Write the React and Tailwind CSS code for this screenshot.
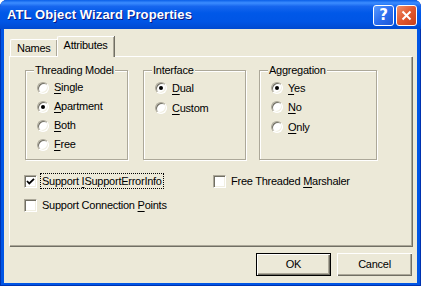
import React from 'react';

const sunken =
  'bg-white border border-t-[#ACA899] border-l-[#ACA899] border-r-white border-b-white shadow-[inset_1px_1px_0_#716F64,inset_-1px_-1px_0_#F1EFE2]';

function Mn({ children }) {
  return <span className="underline underline-offset-[2px] decoration-[1px]">{children}</span>;
}

function Radio({ checked, label }) {
  return (
    <div className="flex items-center h-full">
      <div className={`w-[12px] h-[12px] rounded-full flex items-center justify-center ${sunken}`}>
        {checked && <div className="w-[4px] h-[4px] rounded-full bg-black" />}
      </div>
      <span className="ml-[5px]">{label}</span>
    </div>
  );
}

function Check({ checked, label, focused }) {
  return (
    <div className="flex items-center">
      <div className={`w-[13px] h-[13px] flex items-center justify-center ${sunken}`}>
        {checked && (
          <svg width="9" height="9" viewBox="0 0 9 9">
            <path d="M1 4 L3.3 6.5 L8 1.8" fill="none" stroke="#000" strokeWidth="1.8" />
          </svg>
        )}
      </div>
      <span
        className={`ml-[4px] px-[1px] leading-[14px] ${
          focused ? 'outline outline-1 outline-dotted outline-black' : ''
        }`}
      >
        {label}
      </span>
    </div>
  );
}

function Group({ title, width, rowH, children }) {
  return (
    <div
      className={`relative h-[90px] border border-[#ACA899] shadow-[inset_1px_1px_0_#fff,1px_1px_0_#fff] ${width}`}
    >
      <span className="absolute left-[8px] top-[-8px] px-[1px] bg-[#ECE9D8] leading-[14px]">
        {title}
      </span>
      <div className="flex flex-col pt-[7px] pl-[11px]">
        {React.Children.map(children, (c) => (
          <div className={rowH}>{c}</div>
        ))}
      </div>
    </div>
  );
}

function Button({ children, isDefault }) {
  return (
    <button
      className={`w-[75px] h-[23px] bg-[#ECE9D8] text-[11px] ${
        isDefault
          ? 'border border-black shadow-[inset_1px_1px_0_#fff,inset_-1px_-1px_0_#716F64,inset_-2px_-2px_0_#ACA899]'
          : 'shadow-[inset_1px_1px_0_#fff,inset_-1px_-1px_0_#716F64,inset_-2px_-2px_0_#ACA899]'
      }`}
    >
      {children}
    </button>
  );
}

export default function App() {
  return (
    <div className="w-[421px] h-[286px] bg-white">
      <div className="w-full h-full flex flex-col rounded-t-[7px] overflow-hidden bg-[#0055E5] shadow-[inset_1px_0_0_#0033B0,inset_-1px_0_0_#0033B0,inset_0_-1px_0_#0033B0] font-['Liberation_Sans',Arial,sans-serif] text-[11px] text-black">
        {/* Title bar */}
        <div className="h-[29px] shrink-0 flex items-center px-[7px] bg-[linear-gradient(to_bottom,#0A5FE8_0%,#3C8DFF_10%,#1766EE_22%,#0058E8_45%,#0055E5_75%,#0049D0_100%)]">
          <span className="text-white font-bold text-[13px] tracking-[0.1px] [text-shadow:1px_1px_0_#0A1883]">
            ATL Object Wizard Properties
          </span>
          <div className="ml-auto flex gap-[2px] pt-[1px] mr-[-3px]">
            <div className="w-[21px] h-[21px] rounded-[3px] border border-white flex items-center justify-center bg-[linear-gradient(135deg,#5A9BFF_0%,#2D6FEF_50%,#1C58D8_100%)]">
              <span className="text-white font-bold text-[15px] leading-none font-['DejaVu_Sans',sans-serif]">?</span>
            </div>
            <div className="w-[21px] h-[21px] rounded-[3px] border border-white flex items-center justify-center bg-[linear-gradient(135deg,#F0906A_0%,#E0582F_50%,#C8401C_100%)]">
              <svg width="11" height="11" viewBox="0 0 11 11">
                <path d="M1.5 1.5 L9.5 9.5 M9.5 1.5 L1.5 9.5" stroke="#fff" strokeWidth="2" />
              </svg>
            </div>
          </div>
        </div>

        {/* Client area */}
        <div className="flex-1 mx-[4px] mb-[3px] bg-[#ECE9D8] px-[5px] pt-[7px] flex flex-col tracking-[-0.25px]">
          {/* Tabs */}
          <div className="flex items-end h-[20px] relative z-10">
            <div className="ml-[1px] h-[17px] px-[6px] flex items-center border-l border-t border-white shadow-[inset_-1px_0_0_#ACA899] rounded-tl-[2px]">
              Names
            </div>
            <div className="h-[21px] mb-[-1px] px-[6px] flex items-center bg-[#ECE9D8] border-l border-t border-white shadow-[inset_-1px_0_0_#ACA899,1px_0_0_#716F64] rounded-tl-[2px] pb-[3px]">
              Attributes
            </div>
          </div>

          {/* Tab panel */}
          <div className="h-[190px] border-l border-t border-white shadow-[1px_1px_0_#716F64,inset_-1px_-1px_0_#ACA899] pl-[15px] pt-[13px]">
            <div className="flex">
              <Group title="Threading Model" width="w-[103px]" rowH="h-[19px]">
                <Radio label={<><Mn>S</Mn>ingle</>} />
                <Radio checked label={<><Mn>A</Mn>partment</>} />
                <Radio label={<><Mn>B</Mn>oth</>} />
                <Radio label={<><Mn>F</Mn>ree</>} />
              </Group>
              <div className="ml-[15px]">
                <Group title="Interface" width="w-[103px]" rowH="h-[20px]">
                  <Radio checked label={<><Mn>D</Mn>ual</>} />
                  <Radio label={<><Mn>C</Mn>ustom</>} />
                </Group>
              </div>
              <div className="ml-[13px]">
                <Group title="Aggregation" width="w-[118px]" rowH="h-[19.5px]">
                  <Radio checked label={<><Mn>Y</Mn>es</>} />
                  <Radio label={<><Mn>N</Mn>o</>} />
                  <Radio label={<><Mn>O</Mn>nly</>} />
                </Group>
              </div>
            </div>

            <div className="mt-[14px] ml-[-1px] flex flex-col gap-[10px]">
              <div className="flex">
                <div className="w-[189px]">
                  <Check checked focused label={<>Support <Mn>I</Mn>SupportErrorInfo</>} />
                </div>
                <Check label={<>Free Threaded <Mn>M</Mn>arshaler</>} />
              </div>
              <Check label={<>Support Connection <Mn>P</Mn>oints</>} />
            </div>
          </div>

          {/* Buttons */}
          <div className="mt-[7px] flex justify-end gap-[6px]">
            <Button isDefault>OK</Button>
            <Button>Cancel</Button>
          </div>
        </div>
      </div>
    </div>
  );
}
